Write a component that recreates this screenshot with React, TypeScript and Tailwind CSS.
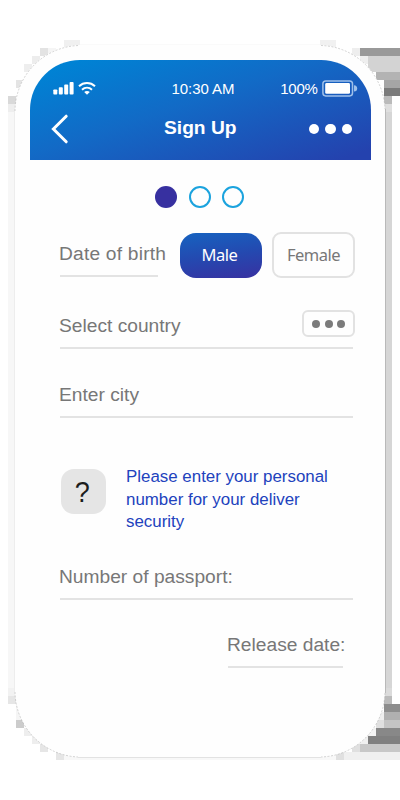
import React from 'react';

type Block = [x: number, y: number, w: number, h: number, fill: string];

const shadowBlocks: Block[] = [
  [64, 40, 16, 8, '#f0f0f0'],
  [80, 44, 240, 2, '#fafafa'],
  [40, 48, 8, 8, '#e3e3e3'],
  [48, 48, 8, 8, '#f5f5f5'],
  [32, 56, 8, 8, '#ededed'],
  [24, 64, 8, 8, '#eeeeee'],
  [16, 80, 8, 8, '#e4e4e4'],
  [8, 96, 8, 8, '#d9d9d9'],
  [8, 104, 8, 8, '#eeeeee'],
  [8, 112, 8, 576, '#f7f7f7'],
  [8, 688, 8, 8, '#f2f2f2'],
  [8, 696, 8, 8, '#e6e6e6'],
  [16, 704, 8, 16, '#f5f5f5'],
  [16, 720, 8, 8, '#cccccc'],
  [24, 728, 8, 8, '#eeeeee'],
  [32, 736, 8, 8, '#eeeeee'],
  [40, 744, 8, 8, '#e6e6e6'],
  [56, 752, 8, 8, '#e6e6e6'],
  [64, 752, 272, 8, '#f8f8f8'],
  [320, 40, 16, 8, '#f1f1f1'],
  [352, 48, 8, 8, '#eeeeee'],
  [360, 48, 40, 8, '#999999'],
  [360, 56, 8, 8, '#eeeeee'],
  [368, 56, 32, 16, '#d3d3d3'],
  [376, 72, 24, 8, '#b3b3b3'],
  [384, 80, 16, 8, '#a6a6a6'],
  [384, 88, 16, 8, '#7b7b7b'],
  [384, 96, 8, 8, '#bbbbbb'],
  [384, 104, 8, 8, '#dfdfdf'],
  [384, 112, 8, 576, '#d6d6d6'],
  [384, 688, 8, 8, '#dbdbdb'],
  [384, 696, 8, 8, '#bbbbbb'],
  [384, 704, 16, 8, '#8d8d8d'],
  [376, 712, 8, 8, '#eeeeee'],
  [384, 712, 16, 8, '#b0b0b0'],
  [376, 720, 8, 8, '#e0e0e0'],
  [384, 720, 16, 8, '#c4c4c4'],
  [368, 728, 8, 8, '#f3f3f3'],
  [376, 728, 24, 8, '#888888'],
  [360, 736, 8, 8, '#f0f0f0'],
  [368, 736, 32, 8, '#808080'],
  [352, 744, 8, 8, '#e0e0e0'],
  [360, 744, 40, 8, '#c8c8c8'],
  [336, 752, 8, 8, '#e0e0e0'],
  [344, 752, 56, 8, '#f0f0f0'],
];

function PhoneShadow() {
  return (
    <svg className="absolute inset-0" width="400" height="800" viewBox="0 0 400 800" aria-hidden="true">
      <g shapeRendering="crispEdges">
        {shadowBlocks.map(([x, y, w, h, fill]) => (
          <rect key={`${x}-${y}`} x={x} y={y} width={w} height={h} fill={fill} />
        ))}
      </g>
      <rect x="15" y="45" width="370" height="712" rx="66" fill="#fefefe" />
      <g fill="none" strokeWidth="0.5">
        <path d="M15 111A66 66 0 0 1 79 45.5M321 45.5A66 66 0 0 1 385 109M15 692A66 66 0 0 0 78 757M385 693A66 66 0 0 1 321 757" stroke="#a8a8a8" strokeDasharray="2 1.5" />
        <path d="M78 757.5H321" stroke="#e2e2e2" strokeWidth="1" />
        <path d="M385.5 109V693" stroke="#b9b9b9" strokeWidth="1" />
        <path d="M14.5 111V692" stroke="#ededed" strokeWidth="1" />
      </g>
    </svg>
  );
}

function StatusBar() {
  return (
    <div className="flex h-5 items-center pl-[23px] pr-[13px] text-[15px] leading-5">
      <svg width="21" height="14" viewBox="0 0 21 14" fill="#fff">
        <rect x="0.3" y="8.4" width="4" height="5" rx="0.9" />
        <rect x="5.8" y="6.2" width="4" height="7.2" rx="0.9" />
        <rect x="11.2" y="3.6" width="4" height="9.8" rx="0.9" />
        <rect x="16.6" y="1" width="4" height="12.4" rx="0.9" />
      </svg>
      <svg className="ml-1" width="18" height="14" viewBox="0 0 18 14" fill="none" stroke="#fff" strokeWidth="2">
        <path d="M1 5.2C5.6 1 12.4 1 17 5.2" />
        <path d="M4 8.7C6.9 6.1 11.1 6.1 14 8.7" />
        <path d="M6.2 11C7.8 9.5 10.2 9.5 11.8 11L9 13.8Z" fill="#fff" stroke="none" />
      </svg>
      <span className="ml-[76px] w-[64px] whitespace-nowrap pt-px text-[15px] tracking-[-0.05px]">10:30 AM</span>
      <span className="ml-auto pt-px text-[15px] tracking-[-0.3px]">100%</span>
      <svg className="ml-[4px]" width="36" height="17" viewBox="0 0 36 17">
        <rect x="0.9" y="0.9" width="29.6" height="15" rx="2.8" fill="none" stroke="#9fc0ea" strokeWidth="1.5" />
        <rect x="3.2" y="3" width="24.8" height="10.8" rx="1.4" fill="#fff" />
        <path d="M32 5.2C34.2 5.4 35.2 6.8 35.2 8.4S34.2 11.4 32 11.6Z" fill="#9fc0ea" />
      </svg>
    </div>
  );
}

function Header() {
  return (
    <header className="mx-[14.5px] mt-[15px] h-[99.5px] rounded-t-[50px] bg-[linear-gradient(162deg,#0082d4_8%,#126ac6_45%,#2442ae_95%)] pt-[18px] text-white">
      <StatusBar />
      <div className="mt-[16px] flex h-[30px] items-center pl-[21px] pr-[18.5px]">
        <svg width="18" height="30" viewBox="0 0 18 30" fill="none" stroke="#fff" strokeWidth="3" strokeLinecap="round">
          <path d="M15.2 2.2L2.4 15L15.2 27.8" />
        </svg>
        <h1 className="-mt-[3px] ml-[95.5px] whitespace-nowrap text-[19.2px] font-bold leading-6">Sign Up</h1>
        <div className="ml-auto flex gap-[6px]">
          <i className="size-[10.5px] rounded-full bg-white" />
          <i className="size-[10.5px] rounded-full bg-white" />
          <i className="size-[10.5px] rounded-full bg-white" />
        </div>
      </div>
    </header>
  );
}

function Stepper() {
  return (
    <div className="mt-[26.5px] flex justify-center gap-[11.5px] pr-px">
      <i className="size-[22px] rounded-full bg-[#3730a0]" />
      <i className="size-[22px] rounded-full border-2 border-[#1ba3de]" />
      <i className="size-[22px] rounded-full border-2 border-[#1ba3de]" />
    </div>
  );
}

function Field({ label, className = '', labelClass = '' }: { label: string; className?: string; labelClass?: string }) {
  return (
    <div className={`flex flex-col gap-[9px] ${className}`}>
      <span className={`-ml-px h-[25px] whitespace-nowrap pt-px text-[19.2px] leading-6 text-[#777] ${labelClass}`}>{label}</span>
      <span className="h-[2px] bg-[#e3e3e3]" />
    </div>
  );
}

export default function App() {
  return (
    <div className="relative h-[800px] w-[400px] overflow-hidden bg-white font-['Liberation_Sans',Arial,sans-serif]">
      <PhoneShadow />
      <main className="relative mx-[15px] flex h-[757px] flex-col pt-[45px]">
        <Header />
        <Stepper />

        <div className="mt-[24px] flex h-[46px] items-start pl-[45px]">
          <Field label="Date of birth" className="mt-[9px] w-[98px]" labelClass="tracking-[0.2px]" />
          <button className="ml-[22px] mt-px h-[45px] w-[82px] rounded-[16px] bg-[linear-gradient(172deg,#1663c0,#2449b0_50%,#3831a1)] pr-[3px] font-['Noto_Sans',sans-serif] text-[16.5px] tracking-[-0.5px] text-white">
            Male
          </button>
          <button className="ml-[10px] h-[46px] w-[83px] rounded-[9px] border-2 border-[#e2e2e2] pt-px font-['Noto_Sans',sans-serif] text-[16.5px] tracking-[-0.5px] text-[#777]">
            Female
          </button>
        </div>

        <div className="mt-[35px] grid w-[340px] grid-cols-[293px] pl-[45px]">
          <Field label="Select country" className="col-start-1 row-start-1" />
          <button className="col-start-1 row-start-1 -mr-[2px] -mt-[3px] flex h-[27px] w-[53px] items-center justify-center gap-[4.7px] justify-self-end rounded-[6px] border-2 border-[#e2e2e2]">
            <i className="size-2 rounded-full bg-[#7b7b7b]" />
            <i className="size-2 rounded-full bg-[#7b7b7b]" />
            <i className="size-2 rounded-full bg-[#7b7b7b]" />
          </button>
        </div>

        <Field label="Enter city" className="ml-[45px] mt-[33px] w-[293px]" />

        <div className="mt-[48px] flex pl-[46px]">
          <div className="mt-[3px] flex h-[45px] w-[44.5px] items-center justify-center rounded-[13px] bg-[#e5e5e5] pr-[2px] text-[30px] leading-none text-[#1d1d1d]">
            <span className="scale-x-90">?</span>
          </div>
          <p className="ml-[20.5px] text-[16.9px] leading-[22.5px] text-[#2142bd]">
            Please enter your personal
            <br />
            number for your deliver
            <br />
            security
          </p>
        </div>

        <Field label="Number of passport:" className="ml-[45px] mt-[30.5px] w-[293px]" />
        <Field label="Release date:" className="ml-[213px] mt-[32px] w-[115px]" />
      </main>
    </div>
  );
}
